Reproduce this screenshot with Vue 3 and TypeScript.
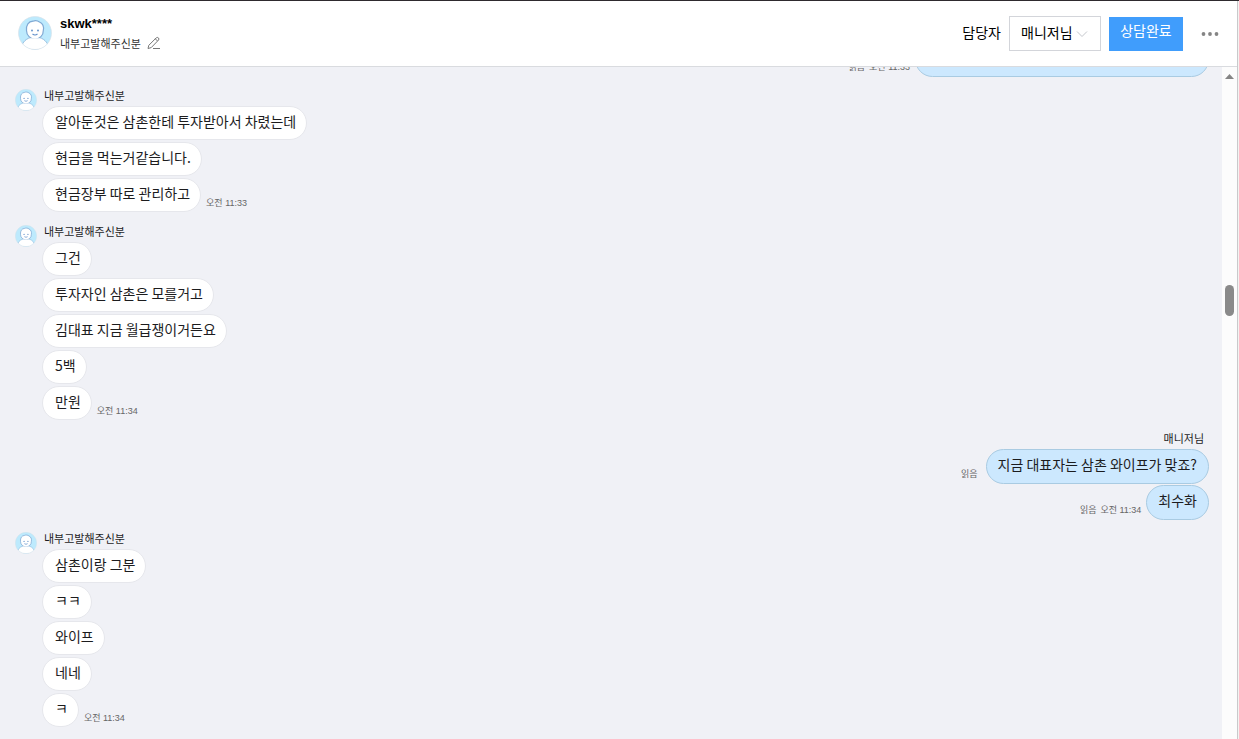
<script setup lang="ts">
import { ref } from 'vue'

interface Message {
  text: string
  read?: boolean
  time?: string
}

interface Group {
  from: 'client' | 'staff'
  name: string
  messages: Message[]
}

const managers = ['매니저님']
const manager = ref(managers[0])

const clientName = '내부고발해주신분'
const scroll = { top: 32.5, size: 4.5 }

const groups: Group[] = [
  { from: 'staff', name: '', messages: [{ text: '', read: true, time: '오전 11:33' }] },
  {
    from: 'client',
    name: clientName,
    messages: [
      { text: '알아둔것은 삼촌한테 투자받아서 차렸는데' },
      { text: '현금을 먹는거같습니다.' },
      { text: '현금장부 따로 관리하고', time: '오전 11:33' },
    ],
  },
  {
    from: 'client',
    name: clientName,
    messages: [
      { text: '그건' },
      { text: '투자자인 삼촌은 모를거고' },
      { text: '김대표 지금 월급쟁이거든요' },
      { text: '5백' },
      { text: '만원', time: '오전 11:34' },
    ],
  },
  {
    from: 'staff',
    name: '매니저님',
    messages: [
      { text: '지금 대표자는 삼촌 와이프가 맞죠?', read: true },
      { text: '최수화', read: true, time: '오전 11:34' },
    ],
  },
  {
    from: 'client',
    name: clientName,
    messages: [
      { text: '삼촌이랑 그분' },
      { text: 'ㅋㅋ' },
      { text: '와이프' },
      { text: '네네' },
      { text: 'ㅋ', time: '오전 11:34' },
    ],
  },
]
</script>

<template>
  <div class="window">
    <svg class="defs" aria-hidden="true">
      <symbol id="person" viewBox="0 0 34 34">
        <clipPath id="disc"><circle cx="17" cy="17" r="16.5" /></clipPath>
        <g clip-path="url(#disc)">
          <rect width="34" height="34" fill="#bdeafd" />
          <path d="M3 34C3.500 27.500 6.500 23.500 12.500 21.500H21.500C27.500 23.500 30.500 27.500 31 34Z" fill="#fff" stroke="#8fb9dc" stroke-width=".9" />
          <path d="M8.500 14.500C8 9 10.500 5.500 15 5.200C16.500 4.500 19.500 4.600 21.500 6C24.800 7.500 26 11 25.300 14.500C25.500 19.500 21.500 23 17 23S8.500 19.500 8.500 14.500Z" fill="#fff" stroke="#7fa9d4" stroke-width="1.200" />
          <path d="M12.500 22.300H21.500V26H12.500Z" fill="#fff" />
          <circle cx="14" cy="14.500" r=".9" fill="#5c8cc8" />
          <circle cx="20" cy="14.500" r=".9" fill="#5c8cc8" />
          <path d="M14.500 18Q17 20 19.500 18" fill="none" stroke="#5c8cc8" stroke-width="1.100" />
        </g>
        <circle cx="17" cy="17" r="16.500" fill="none" stroke="#d6dfe6" stroke-width=".6" />
      </symbol>
    </svg>

    <div class="chat">
      <header class="top">
        <svg class="photo"><use href="#person" /></svg>
        <div class="who">
          <strong class="account">skwk****</strong>
          <div class="alias">
            <span>{{ clientName }}</span>
            <button class="edit" type="button" aria-label="이름 수정">
              <svg width="14" height="14" viewBox="0 0 14 14" fill="none" stroke="#777" stroke-width="1">
                <path d="M1 12.500L1.800 9.300L9.300 1.800Q10.300 .9 11.400 1.900Q12.500 3 11.500 4.100L4.200 11.600L1 12.500ZM8.300 2.800L10.500 5M6 12.500H13" />
              </svg>
            </button>
          </div>
        </div>
        <div class="actions">
          <label class="assignee" for="manager">담당자</label>
          <span class="picker">
            <select id="manager" v-model="manager">
              <option v-for="m in managers" :key="m">{{ m }}</option>
            </select>
            <svg class="chevron" width="12" height="8" viewBox="0 0 12 8" fill="none" stroke="#c4c7cc"><path d="M1 1.500L6 6.500L11 1.500" /></svg>
          </span>
          <button class="done" type="button">상담완료</button>
          <button class="more" type="button" aria-label="더보기">
            <svg width="18" height="4" viewBox="0 0 18 4" fill="#858585"><circle cx="2.500" cy="2" r="1.900" /><circle cx="9" cy="2" r="1.900" /><circle cx="15.500" cy="2" r="1.900" /></svg>
          </button>
        </div>
      </header>

      <div class="body">
        <main class="log">
          <section v-for="(g, i) in groups" :key="i" class="group" :class="g.from">
            <svg v-if="g.from === 'client'" class="face"><use href="#person" /></svg>
            <div class="stack">
              <div class="name">{{ g.name }}</div>
              <div v-for="(m, j) in g.messages" :key="j" class="row">
                <p class="bubble" :class="{ long: !m.text }">{{ m.text }}</p>
                <span v-if="m.read || m.time" class="meta">
                  <span v-if="m.read" class="read">읽음</span>
                  <time v-if="m.time">{{ m.time }}</time>
                </span>
              </div>
            </div>
          </section>
        </main>
        <div class="track">
          <svg class="arrow" width="9" height="5" viewBox="0 0 9 5"><path d="M0 5L4.500 0L9 5Z" fill="#858585" /></svg>
          <div class="thumb" :style="{ top: scroll.top + '%', height: scroll.size + '%' }"></div>
        </div>
      </div>
    </div>
    <div class="edge"></div>
  </div>
</template>

<style>
body {
  margin: 0;
}
</style>

<style scoped>
.window {
  display: flex;
  box-sizing: border-box;
  height: 100vh;
  border-top: 1px solid #2e2a2e;
  overflow: hidden;
  background: #fff;
  color: #1c1c1e;
  font-family: "Noto Sans CJK KR", sans-serif;
  font-size: 14px;
}
.defs {
  position: absolute;
  width: 0;
  height: 0;
}
button,
select {
  margin: 0;
  padding: 0;
  border: 0;
  background: none;
  color: inherit;
  font: inherit;
}
.chat {
  display: flex;
  flex: 1;
  flex-direction: column;
  min-width: 0;
  border-right: 1px solid #c9c9cb;
}
.edge {
  width: 1px;
  background: #f3f3f1;
}
.top {
  display: flex;
  flex: none;
  align-items: center;
  box-sizing: border-box;
  height: 66px;
  padding: 0 18px;
  border-bottom: 1px solid #d9dbdf;
}
.photo {
  width: 34px;
  height: 34px;
  margin: 0 8px 2px 0;
}
.account {
  display: block;
  color: #000;
  font: bold 13px/18px "Liberation Sans", Arial, sans-serif;
}
.alias {
  display: flex;
  align-items: center;
  gap: 6px;
  color: #333;
  font-size: 11px;
  line-height: 20px;
}
.edit,
.more {
  display: flex;
}
.actions {
  display: flex;
  align-items: center;
  margin-left: auto;
}
.assignee {
  margin-right: 8px;
  padding-bottom: 4px;
  color: #000;
}
.picker {
  display: flex;
  align-items: center;
  box-sizing: border-box;
  width: 92px;
  height: 35px;
  margin-right: 8px;
  border: 1px solid #d3d5da;
}
.picker select {
  width: 100%;
  height: 100%;
  padding: 0 0 3px 11px;
  appearance: none;
  color: #000;
}
.chevron {
  flex: none;
  margin: 0 12px 0 -24px;
  pointer-events: none;
}
.done {
  width: 74px;
  height: 34px;
  padding-bottom: 7px;
  background: #409dfc;
  color: #fff;
}
.more {
  margin-left: 18px;
}
.body {
  display: flex;
  flex: 1;
  min-height: 0;
}
.log {
  display: flex;
  flex: 1;
  flex-direction: column;
  justify-content: flex-end;
  padding: 0 13px 10px 15px;
  overflow: hidden;
  background: #f0f1f6;
}
.group {
  display: flex;
  flex: none;
}
.face {
  flex: none;
  width: 22px;
  height: 22px;
  margin: 11px 5px 0 0;
}
.stack {
  flex: 1;
}
.name {
  height: 28px;
  padding: 7px 2px 0;
  box-sizing: border-box;
  font-size: 11px;
  line-height: 20px;
}
.row {
  display: flex;
  align-items: flex-start;
  gap: 5px;
  height: 36px;
}
.bubble {
  box-sizing: border-box;
  height: 34px;
  margin: 0;
  padding: 0 10px 0 12px;
  border: 1px solid #e6e7ec;
  border-radius: 17px;
  background: #fff;
  line-height: 28px;
  white-space: nowrap;
}
.meta {
  display: flex;
  gap: 4px;
  padding-top: 18px;
  color: #666;
  font-family: "Liberation Sans", "Noto Sans CJK KR", sans-serif;
  font-size: 9px;
  line-height: 14px;
}
.read:last-child {
  margin-right: 3px;
}
.staff .name {
  height: 27px;
  padding: 6px 5px 0 0;
  text-align: right;
}
.staff .row {
  flex-direction: row-reverse;
}
.staff .bubble {
  height: 35px;
  padding: 0 11px;
  border-color: #a9cbe2;
  border-radius: 18px;
  background: #cce8fe;
}
.staff .long {
  width: 294px;
}
.track {
  position: relative;
  flex: none;
  width: 15px;
  background: #fcfcfc;
}
.arrow {
  display: block;
  margin: 7px auto 0 3px;
}
.thumb {
  position: absolute;
  left: 3px;
  width: 9px;
  border-radius: 5px;
  background: #8a8a8a;
}
</style>
